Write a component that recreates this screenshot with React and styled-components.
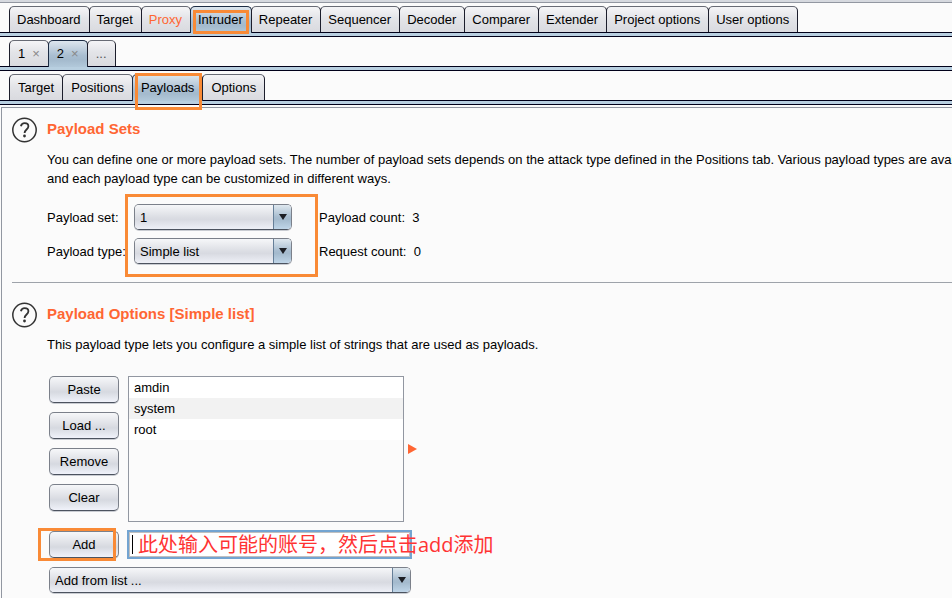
import React, {useState} from 'react';
import styled, {createGlobalStyle, css} from 'styled-components';

const mainTabs = ['Dashboard', 'Target', 'Proxy', 'Intruder', 'Repeater', 'Sequencer', 'Decoder', 'Comparer', 'Extender', 'Project options', 'User options'];
const attackTabs = ['1', '2', '...'];
const intruderTabs = ['Target', 'Positions', 'Payloads', 'Options'];
const payloads = ['amdin', 'system', 'root'];

const Tabs = ({items, selected, onSelect, alert, marked, markShape, closable, tight}) => (
    <TabRow>
        {items.map((item) => (
            <Tab key={item} type="button" $tight={tight} $active={item === selected} $alert={item === alert} $muted={item === '...'} onClick={() => onSelect(item)}>
                {item}
                {closable && item !== '...' && <Close>×</Close>}
                {item === marked && <TabMark $shape={markShape} />}
            </Tab>
        ))}
    </TabRow>
);

const Help = () => (
    <HelpIcon viewBox="0 0 26 26" aria-hidden="true">
        <circle cx="12.5" cy="13" r="11.7" fill="none" stroke="#333" strokeWidth="1.5" />
        <path d="M8.9 9.2C9.4 7.2 10.9 6.2 12.7 6.2c2.2 0 3.7 1.2 3.7 3.1 0 3.2-3.8 3.2-3.8 6.7" fill="none" stroke="#333" strokeWidth="1.8" />
        <circle cx="12.5" cy="19" r="1.4" fill="#333" />
    </HelpIcon>
);

const Dropdown = ({id, label, options, wide}) => (
    <SelectBox $wide={wide}>
        <Select id={id} aria-label={label}>
            {options.map((option) => <option key={option}>{option}</option>)}
        </Select>
    </SelectBox>
);

export default function App() {
    const [main, setMain] = useState('Intruder');
    const [attack, setAttack] = useState('2');
    const [page, setPage] = useState('Payloads');
    const [item, setItem] = useState('');

    return (
        <Window>
            <GlobalStyle />
            <TopEdge />
            <Tabs items={mainTabs} selected={main} onSelect={setMain} alert="Proxy" marked="Intruder" markShape="inner" tight />
            <Tabs items={attackTabs} selected={attack} onSelect={setAttack} closable />
            <Tabs items={intruderTabs} selected={page} onSelect={setPage} marked="Payloads" markShape="outer" />
            <Panel>
                <Section>
                    <Help />
                    <Body>
                        <Heading>Payload Sets</Heading>
                        <Text>
                            You can define one or more payload sets. The number of payload sets depends on the attack type defined in the Positions tab. Various payload types are available,<br />
                            and each payload type can be customized in different ways.
                        </Text>
                        <Settings>
                            <label htmlFor="set">Payload set:</label>
                            <Dropdown id="set" options={['1']} />
                            <span>Payload count:&nbsp; 3</span>
                            <label htmlFor="type">Payload type:</label>
                            <Dropdown id="type" options={['Simple list']} />
                            <span>Request count:&nbsp; 0</span>
                            <SettingsMark />
                        </Settings>
                    </Body>
                </Section>
                <Divider />
                <Section $spaced>
                    <Help />
                    <Body>
                        <Heading>Payload Options [Simple list]</Heading>
                        <Text>This payload type lets you configure a simple list of strings that are used as payloads.</Text>
                        <Editor>
                            <Buttons>
                                <Button type="button">Paste</Button>
                                <Button type="button">Load ...</Button>
                                <Button type="button">Remove</Button>
                                <Button type="button">Clear</Button>
                            </Buttons>
                            <List>
                                {payloads.map((payload) => <Item key={payload}>{payload}</Item>)}
                            </List>
                            <Arrow viewBox="0 0 9 10" aria-hidden="true"><path d="M0 0L9 5L0 10Z" fill="#ff6633" /></Arrow>
                        </Editor>
                        <AddRow>
                            <Button type="button">Add</Button>
                            <AddMark />
                            <Input aria-label="New item" autoFocus value={item} onChange={(e) => setItem(e.target.value)} />
                            <Caret />
                            <Note>此处输入可能的账号，然后点击add添加</Note>
                        </AddRow>
                        <Dropdown label="Add from list" options={['Add from list ...']} wide />
                    </Body>
                </Section>
            </Panel>
        </Window>
    );
}

const GlobalStyle = createGlobalStyle`
    * {
        box-sizing: border-box;
    }
    body {
        margin: 0;
        background: #fbfbfb;
        overflow: hidden;
    }
    body, button, input, select {
        font-family: "Liberation Sans", Arial, sans-serif;
        font-size: 13px;
        color: #000;
    }
`;
const Window = styled.div`
    min-height: 100vh;
    display: flex;
    flex-direction: column;
    overflow: hidden;
`;
const TopEdge = styled.div`
    height: 3px;
    background: #d6d9df;
    border-bottom: 1px solid #9297a1;
`;
const TabRow = styled.div`
    display: flex;
    height: 34px;
    padding: 3px 9px 0;
    border-bottom: 1px solid #000019;
    background: linear-gradient(#000019, #000019) 0 29px / 100% 1px no-repeat, linear-gradient(#b8cfe0, #b8cfe0) 0 30px / 100% 3px no-repeat;
`;
const Tab = styled.button`
    position: relative;
    height: 26px;
    padding: ${(p) => (p.$tight ? '0 8px 0 7px' : '0 8px')};
    border: 1px solid #1c1e2c;
    border-top-color: #686b75;
    border-bottom: none;
    border-radius: 5px 5px 0 0;
    background: linear-gradient(#f5f5f7, #e3e4e8 45%, #d9dadf);
    white-space: nowrap;

    & + & {
        margin-left: -1px;
    }
    ${(p) => p.$alert && css`color: #ff6633;`}
    ${(p) => p.$muted && css`color: #555;`}
    ${(p) => p.$active && css`
        height: 30px;
        padding-bottom: 4px;
        border-color: #1c2c44;
        background: linear-gradient(#dde6ee, #a9bed1 50%, #a4bacd 65%, #b8cfe0);

        &::after {
            content: "";
            position: absolute;
            inset: auto -1px 0;
            height: 3px;
            background: #b8cfe0;
        }
    `}
`;
const Close = styled.span`
    margin-left: 7px;
    color: #888;
`;
const Mark = styled.span`
    position: absolute;
    border: 3px solid #f98a36;
    pointer-events: none;
`;
const TabMark = styled(Mark)`
    z-index: 1;
    inset: ${(p) => (p.$shape === 'inner' ? '3px 2px 2px' : '-2px 0 -6px 2px')};
`;
const Panel = styled.main`
    flex: 1;
    margin: 2px 0 0 1px;
    padding-left: 10px;
    border-top: 1px solid #9297a1;
    border-left: 1px solid #9297a1;
`;
const Section = styled.section`
    display: flex;
    gap: 9px;
    padding-top: ${(p) => (p.$spaced ? '19px' : '9px')};
`;
const HelpIcon = styled.svg`
    flex: none;
    width: 26px;
    height: 26px;
`;
const Body = styled.div`
    min-width: 0;
`;
const Heading = styled.h2`
    margin: 2px 0 0;
    font-size: 15px;
    line-height: 20px;
    color: #ff6633;
`;
const Text = styled.p`
    margin: 11px 0 0;
    line-height: 19px;
    white-space: nowrap;
`;
const Settings = styled.div`
    position: relative;
    display: grid;
    grid-template-columns: 78px 158px auto;
    grid-auto-rows: 26px;
    gap: 8px 9px;
    align-items: center;
    margin: 16px 0 18px;

    label, span {
        white-space: nowrap;
    }
    & > span {
        padding-left: 18px;
    }
`;
const SettingsMark = styled(Mark)`
    left: 78px;
    top: -10px;
    width: 193px;
    height: 83px;
`;
const SelectBox = styled.div`
    position: relative;
    height: 26px;
    width: ${(p) => (p.$wide ? '362px' : 'auto')};
    margin-left: ${(p) => (p.$wide ? '2px' : '0')};
    border: 1px solid #7b808a;
    border-bottom-color: #4c535f;
    border-radius: 5px;
    box-shadow: 0 1px 0 #c9ccd2;
    overflow: hidden;

    &::before {
        content: "";
        position: absolute;
        inset: 0 0 0 auto;
        width: 17px;
        border-left: 1px solid #667f98;
        background: linear-gradient(#dfe8ef, #a7bccf 50%, #a4bacd 60%, #bfd5e8);
        pointer-events: none;
    }
    &::after {
        content: "";
        position: absolute;
        right: 4px;
        top: 9px;
        border: 4px solid transparent;
        border-top: 6px solid #1c1e24;
        border-bottom: none;
        pointer-events: none;
    }
`;
const Select = styled.select`
    display: block;
    appearance: none;
    width: 100%;
    height: 100%;
    padding: 0 20px 0 5px;
    border: none;
    outline: none;
    background: linear-gradient(#f6f7f9, #dcdee4 50%, #d8dae1 60%, #eef0f7);
`;
const Divider = styled.hr`
    margin: 0;
    border: none;
    border-top: 1px solid #9ea3aa;
`;
const Editor = styled.div`
    display: flex;
    align-items: center;
    margin: 22px 0 0 2px;
`;
const Buttons = styled.div`
    display: flex;
    flex-direction: column;
    align-self: flex-start;
    gap: 9px;
`;
const Button = styled.button`
    width: 70px;
    height: 27px;
    padding: 0;
    border: 1px solid #7b808a;
    border-bottom-color: #4c535f;
    border-radius: 5px;
    box-shadow: 0 1px 0 #c9ccd2;
    background: linear-gradient(#f6f7f9, #dcdee4 50%, #d6d9e0 60%, #f0f2fa);
`;
const List = styled.ul`
    width: 276px;
    height: 146px;
    margin: 0 4px 0 9px;
    padding: 0;
    border: 1px solid #9297a1;
    list-style: none;
`;
const Item = styled.li`
    padding-left: 5px;
    line-height: 21px;
    background: #fff;

    &:nth-child(even) {
        background: #f2f2f2;
    }
`;
const Arrow = styled.svg`
    width: 9px;
    height: 10px;
`;
const AddRow = styled.div`
    position: relative;
    display: flex;
    align-items: center;
    gap: 8px;
    margin: 8px 0 8px 2px;
`;
const AddMark = styled(Mark)`
    left: -11px;
    top: -2px;
    width: 78px;
    height: 33px;
`;
const Input = styled.input`
    width: 285px;
    height: 29px;
    padding: 0 5px;
    border: 2px solid #73a4d1;
    outline: none;
    background: #fff;
    box-shadow: inset 0 0 0 1px #c0c0c0;
    caret-color: transparent;
`;
const Caret = styled.span`
    position: absolute;
    left: 83px;
    top: 5px;
    width: 1px;
    height: 19px;
    background: #000;
`;
const Note = styled.span`
    position: absolute;
    left: 89px;
    top: 1px;
    font-family: "Open Sans", "Noto Sans CJK SC", sans-serif;
    font-size: 20px;
    line-height: 28px;
    color: #ff3333;
    white-space: nowrap;
    pointer-events: none;
`;
